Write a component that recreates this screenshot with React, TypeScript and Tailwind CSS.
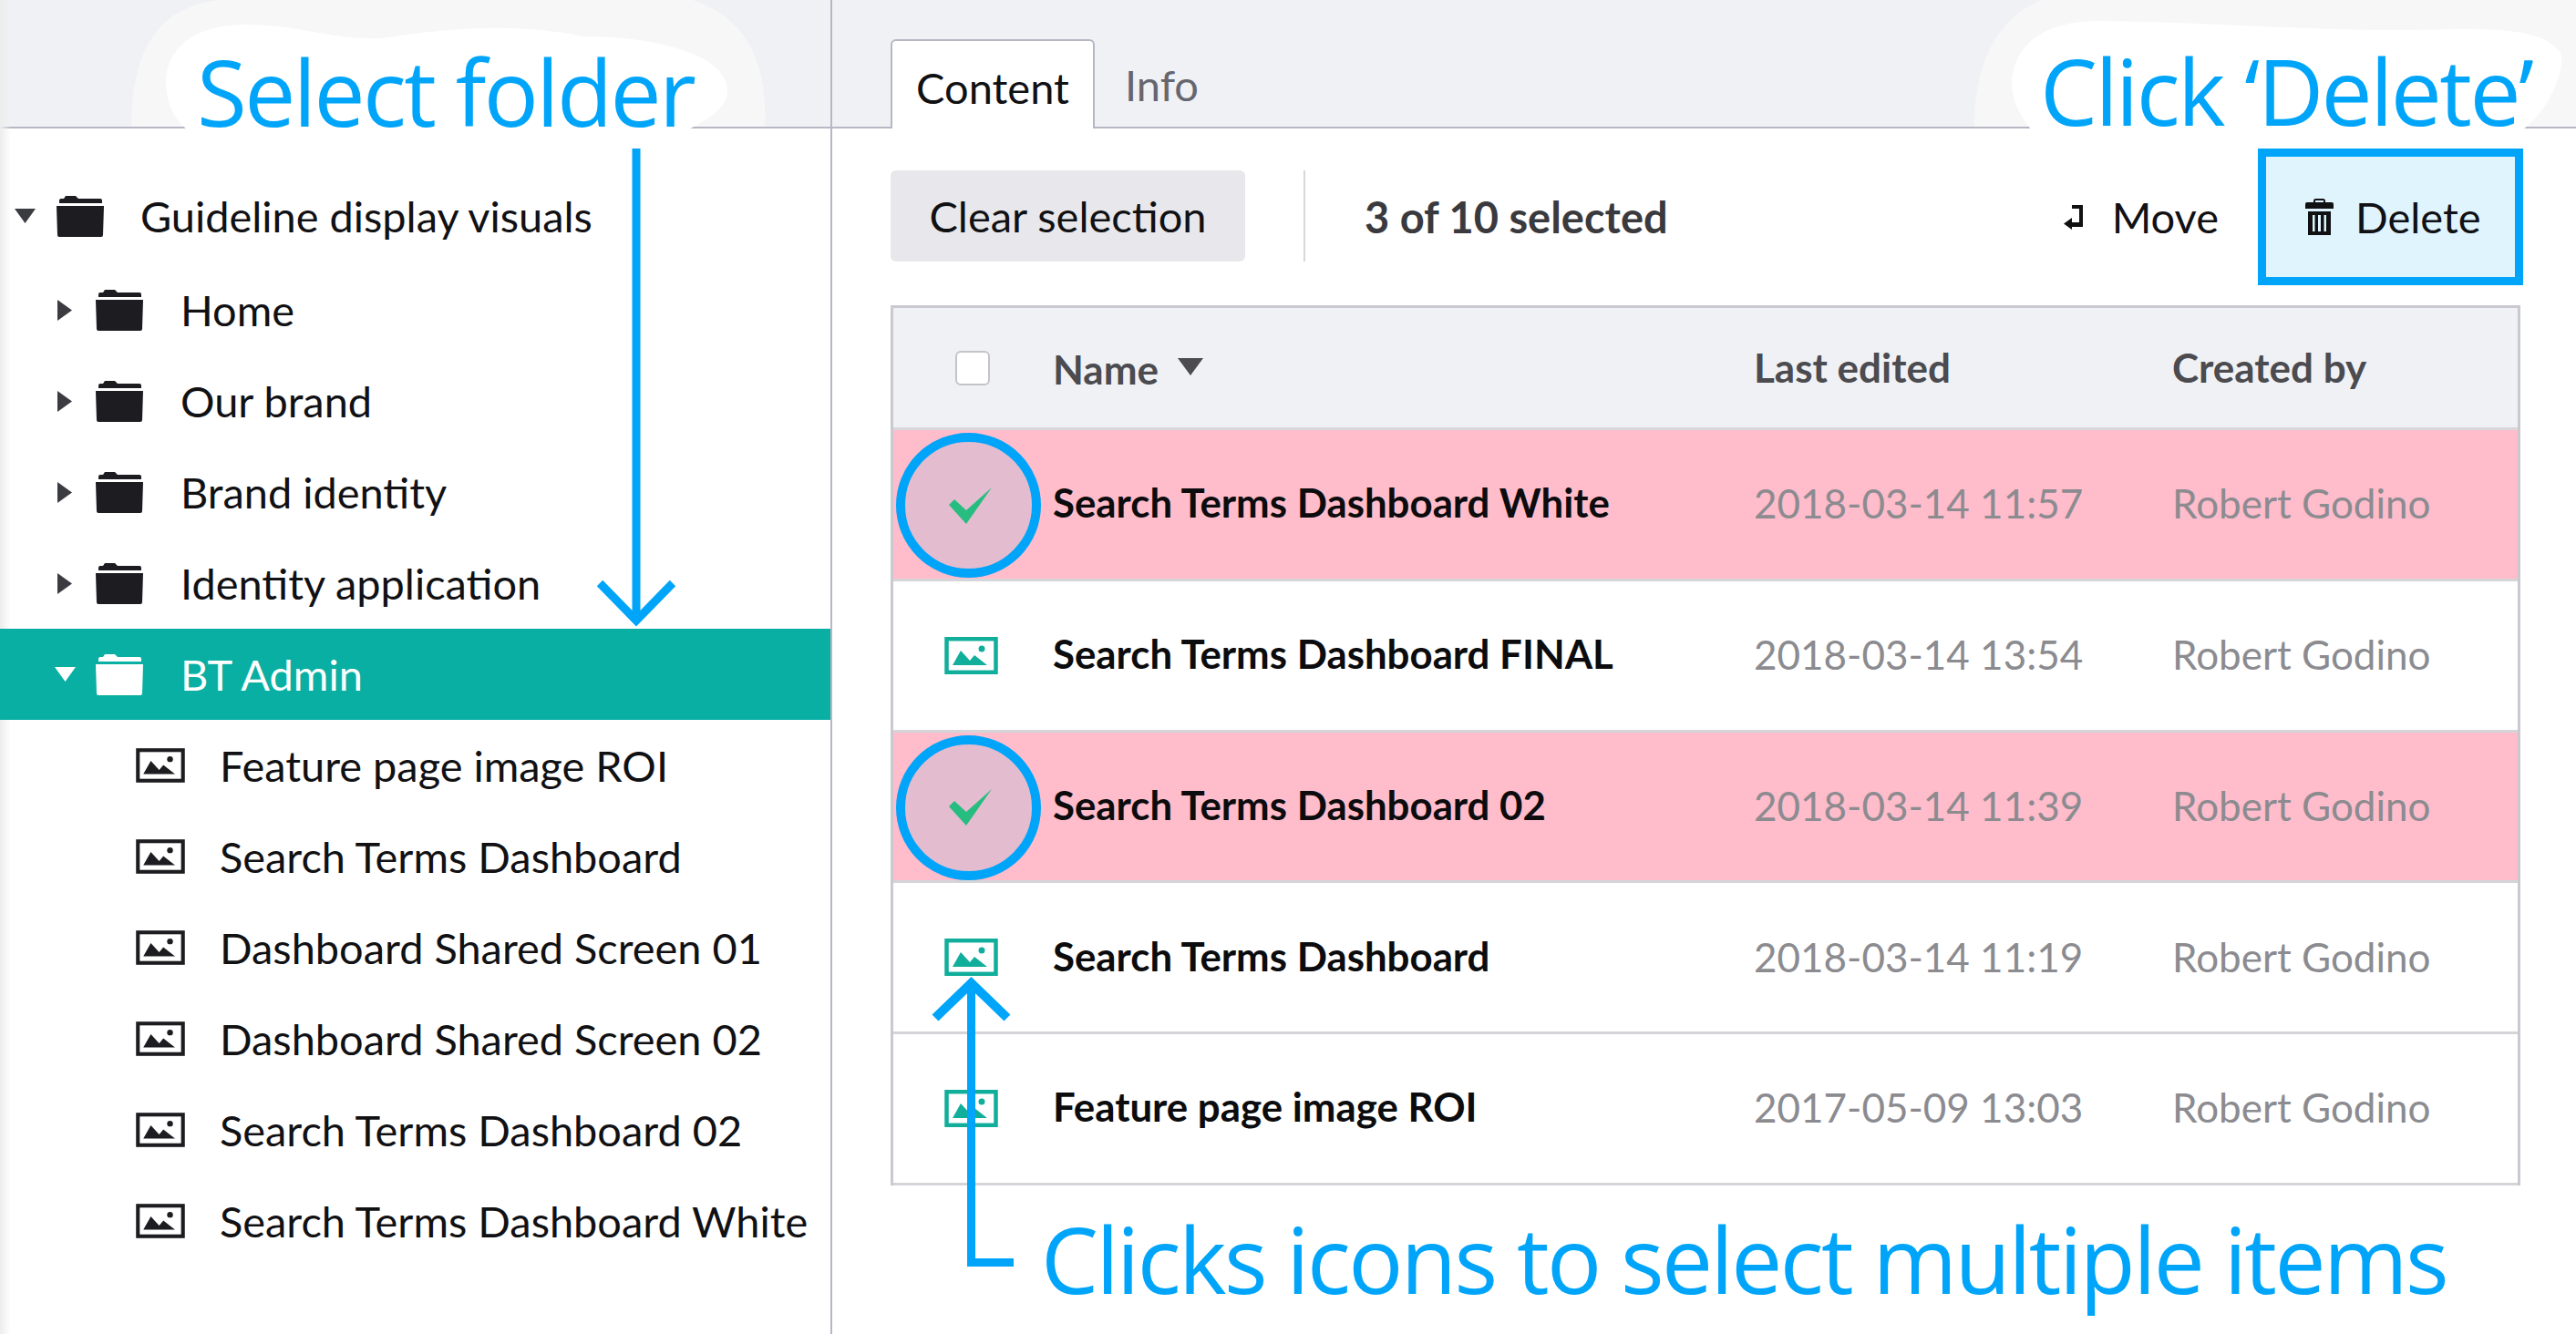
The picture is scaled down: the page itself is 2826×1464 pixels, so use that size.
const blue = '#00a5fa';

function Folder({ color = '#1d1d21' }: { color?: string }) {
  return (
    <svg className="shrink-0" width="52" height="45" viewBox="0 0 52 45" fill={color}>
      <path d="M3 8V5a2 2 0 0 1 2-2h3l2-3h11l3 3h24a2 2 0 0 1 2 2v3H3z" />
      <path d="M0 11h52l-1 32a2 2 0 0 1-2 2H3a2 2 0 0 1-2-2L0 11z" />
    </svg>
  );
}

function ImageIcon({ color = '#1d1d21', w = 54, h = 38 }: { color?: string; w?: number; h?: number }) {
  return (
    <svg className="shrink-0" width={w} height={h} viewBox="0 0 59 41">
      <rect x="2.500" y="2.200" width="54" height="36.600" fill="none" stroke={color} strokeWidth="4.500" />
      <path d="M9 31L18 15L28 26L33 20L47 31z" fill={color} />
      <circle cx="41" cy="13" r="3.500" fill={color} />
    </svg>
  );
}

function Caret({ open, color = '#3b3b42' }: { open: boolean; color?: string }) {
  return open ? (
    <svg className="shrink-0" width="23" height="16" viewBox="0 0 23 16" fill={color}>
      <path d="M0 0h23L11.5 16z" />
    </svg>
  ) : (
    <svg className="shrink-0" width="16" height="23" viewBox="0 0 16 23" fill={color}>
      <path d="M0 0l16 11.5L0 23z" />
    </svg>
  );
}

function FolderRow({ label, open, active }: { label: string; open?: boolean; active?: boolean }) {
  return (
    <div className={`relative flex h-[100px] items-center pl-[63px] ${active ? 'bg-[#09afa3] text-white' : 'text-[#111114]'}`}>
      <div className="flex w-[16px] shrink-0 justify-center">
        <Caret open={!!open} color={active ? '#ffffff' : '#3b3b42'} />
      </div>
      <div className="ml-[26px]">
        <Folder color={active ? '#ffffff' : '#1d1d21'} />
      </div>
      <span className="ml-[41px]">{label}</span>
    </div>
  );
}

function FileRow({ label }: { label: string }) {
  return (
    <div className="flex h-[100px] items-center pl-[149px] text-[#111114]">
      <ImageIcon />
      <span className="ml-[38px]">{label}</span>
    </div>
  );
}

const rows = [
  { name: 'Search Terms Dashboard White', date: '2018-03-14 11:57', selected: true },
  { name: 'Search Terms Dashboard FINAL', date: '2018-03-14 13:54', selected: false },
  { name: 'Search Terms Dashboard 02', date: '2018-03-14 11:39', selected: true },
  { name: 'Search Terms Dashboard', date: '2018-03-14 11:19', selected: false },
  { name: 'Feature page image ROI', date: '2017-05-09 13:03', selected: false },
];

function TableRow({ name, date, selected }: { name: string; date: string; selected: boolean }) {
  return (
    <div className={`relative flex h-[165.75px] items-center border-b-[3px] border-[#d4d4d9] text-[44px] ${selected ? 'bg-[#ffbccb]' : 'bg-white'}`}>
      <div className="flex w-[171px] justify-center">
        {selected ? (
          <div className="mr-[6px] mt-[3px] flex h-[159px] w-[159px] shrink-0 items-center justify-center rounded-full border-[10px] border-[#00a5fa] bg-[#e3bccf] pl-[5px]">
            <svg width="48" height="40" viewBox="0 0 48 40" fill="#27bd80">
              <path d="M0 19l6-6 13 12L47 0 19 40z" />
            </svg>
          </div>
        ) : (
          <ImageIcon color="#11ae9c" w={59} h={41} />
        )}
      </div>
      <div className="ml-[4px] w-[769px] pb-[2px] text-[43.8px] font-bold text-[#0c0c0e]">{name}</div>
      <div className="w-[459px] pb-[2px] text-[#8b8b90]">{date}</div>
      <div className="pb-[2px] text-[#8b8b90]">Robert Godino</div>
    </div>
  );
}

export default function App() {
  return (
    <div className="relative flex h-[1464px] w-[2826px] flex-col overflow-hidden bg-white font-['Lato',sans-serif] text-[47px] leading-none">
      {/* Faint strip down the left edge of the screenshot */}
      <div className="absolute bottom-0 left-0 top-0 w-[12px] bg-gradient-to-r from-[#ededed] to-transparent" />

      {/* Top strip */}
      <div className="flex h-[141px] shrink-0 border-b-2 border-[#b8b6c4] bg-[#f0f1f5]">
        <div className="w-[913px] shrink-0 border-r-2 border-[#b8b6c4]" />
        <div className="flex items-end pl-[64px]">
          <div className="-mb-[2px] flex h-[98px] w-[224px] items-center justify-center rounded-t-[6px] border-2 border-b-0 border-[#b8b6c4] bg-white pt-[6px] text-[#111114]">
            Content
          </div>
          <div className="ml-[33px] flex h-[98px] items-center pt-[6px] text-[#66666f]">Info</div>
        </div>
      </div>

      <div className="flex flex-1">
        {/* Tree */}
        <aside className="w-[913px] shrink-0 border-r-2 border-[#b8b6c4] pt-[46px] text-[46.9px]">
          <div className="relative flex h-[100px] items-center text-[#111114]">
            <div className="ml-[16px] mr-[23px]">
              <Caret open />
            </div>
            <Folder />
            <span className="ml-[40px]">Guideline display visuals</span>
          </div>
          <div className="pt-[3px]">
            <FolderRow label="Home" />
            <FolderRow label="Our brand" />
            <FolderRow label="Brand identity" />
            <FolderRow label="Identity application" />
            <FolderRow label="BT Admin" open active />
            <FileRow label="Feature page image ROI" />
            <FileRow label="Search Terms Dashboard" />
            <FileRow label="Dashboard Shared Screen 01" />
            <FileRow label="Dashboard Shared Screen 02" />
            <FileRow label="Search Terms Dashboard 02" />
            <FileRow label="Search Terms Dashboard White" />
          </div>
        </aside>

        {/* Content */}
        <main className="flex-1 pl-[64px] pr-[61px]">
          <div className="flex h-[194px] items-center">
            <button className="-mt-[2px] flex h-[100px] w-[389px] items-center justify-center rounded-[6px] bg-[#e8e8ec] text-[#111114]">
              Clear selection
            </button>
            <div className="-mt-[2px] ml-[64px] h-[100px] w-[2px] bg-[#d8d8dc]" />
            <span className="ml-[65px] font-bold text-[#3a3a3e]">3 of 10 selected</span>
            <div className="ml-auto flex items-center">
              <svg width="21" height="27" viewBox="0 0 21 27" fill="#111114">
                <path d="M9 0H21V24H9V27L0 20.500L9 14V19H17V4H9Z" />
              </svg>
              <span className="ml-[32px] text-[#111114]">Move</span>
              <div className="-mr-[3px] ml-[43px] flex h-[150px] w-[291px] items-center border-[9px] border-[#00a5fa] bg-[#dff4fd] pl-[43px] text-[#111114]">
                <svg width="31" height="40" viewBox="0 0 31 40" fill="#111114">
                  <path d="M9 4V2.500A2.500 2.500 0 0 1 11.500 0h8A2.500 2.500 0 0 1 22 2.500V4h7a2 2 0 0 1 2 2v5H0V6a2 2 0 0 1 2-2zM11 4h9V2h-9z" fillRule="evenodd" />
                  <path d="M3 14h25v26H3zm5 4v18h2.500V18zm6 0v18h3V18zm6.500 0v18H23V18z" fillRule="evenodd" />
                </svg>
                <span className="ml-[24px]">Delete</span>
              </div>
            </div>
          </div>

          <div className="border-x-[3px] border-t-[3px] border-[#c9c9cf]">
            <div className="flex h-[134px] items-center border-b-[3px] border-[#d8d8dc] bg-[#f0f1f5] text-[44px] font-bold text-[#4b4b50]">
              <div className="flex w-[171px] justify-center">
                <div className="ml-[3px] h-[38px] w-[38px] rounded-[6px] border-2 border-[#c4c4c8] bg-white" />
              </div>
              <div className="ml-[4px] flex w-[769px] items-center">
                <span className="pt-[2px]">Name</span>
                <svg className="-mt-[2px] ml-[21px]" width="28" height="19" viewBox="0 0 28 19" fill="#4b4b50">
                  <path d="M0 0h28L14 19z" />
                </svg>
              </div>
              <div className="w-[459px] pb-[2px]">Last edited</div>
              <div className="pb-[2px]">Created by</div>
            </div>
            {rows.map((r) => (
              <TableRow key={r.name} {...r} />
            ))}
          </div>
        </main>
      </div>

      {/* Annotation halos, drawn over the screenshot */}
      <svg className="absolute left-0 top-0" width="2826" height="160" viewBox="0 0 2826 160">
        <path d="M144 139C144 60 170 8 240 0H760C820 20 842 70 839 139z" fill="#f7f7f8" />
        <path d="M205 142C190 130 182 110 182 90C182 60 205 27 270 27C330 27 360 44 420 42C490 30 570 25 640 40C720 40 798 60 798 100C798 120 770 135 755 142z" fill="#fff" />
        <path d="M2166 139C2166 70 2190 20 2240 0H2826V139z" fill="#f7f7f8" />
        <path d="M2228 142C2215 125 2207 110 2207 90C2210 50 2240 24 2300 23C2420 24 2540 34 2640 33C2720 32 2790 26 2810 60C2812 90 2790 125 2768 142z" fill="#fff" />
      </svg>

      {/* Annotation arrows */}
      <svg className="absolute left-0 top-0" width="2826" height="1464" viewBox="0 0 2826 1464" fill="none" stroke={blue} strokeWidth="9">
        <path d="M698 163V680" />
        <path d="M658 640L698 681L738 640" />
        <path d="M1065.500 1078V1385.500H1112" />
        <path d="M1026 1117L1065.500 1079L1105 1117" strokeWidth="10" />
      </svg>

      {/* Annotation captions */}
      <span className="absolute left-[216px] top-[45px] font-['Open_Sans',sans-serif] text-[100px] leading-[110px] tracking-[-2.6px] text-[#00a5fa]">Select folder</span>
      <span className="absolute left-[2238px] top-[44px] font-['Open_Sans',sans-serif] text-[100px] leading-[110px] tracking-[-2.6px] text-[#00a5fa]">Click ‘Delete’</span>
      <span className="absolute left-[1142px] top-[1326px] font-['Open_Sans',sans-serif] text-[100px] leading-[110px] tracking-[-2.6px] text-[#00a5fa]">Clicks icons to select multiple items</span>
    </div>
  );
}
